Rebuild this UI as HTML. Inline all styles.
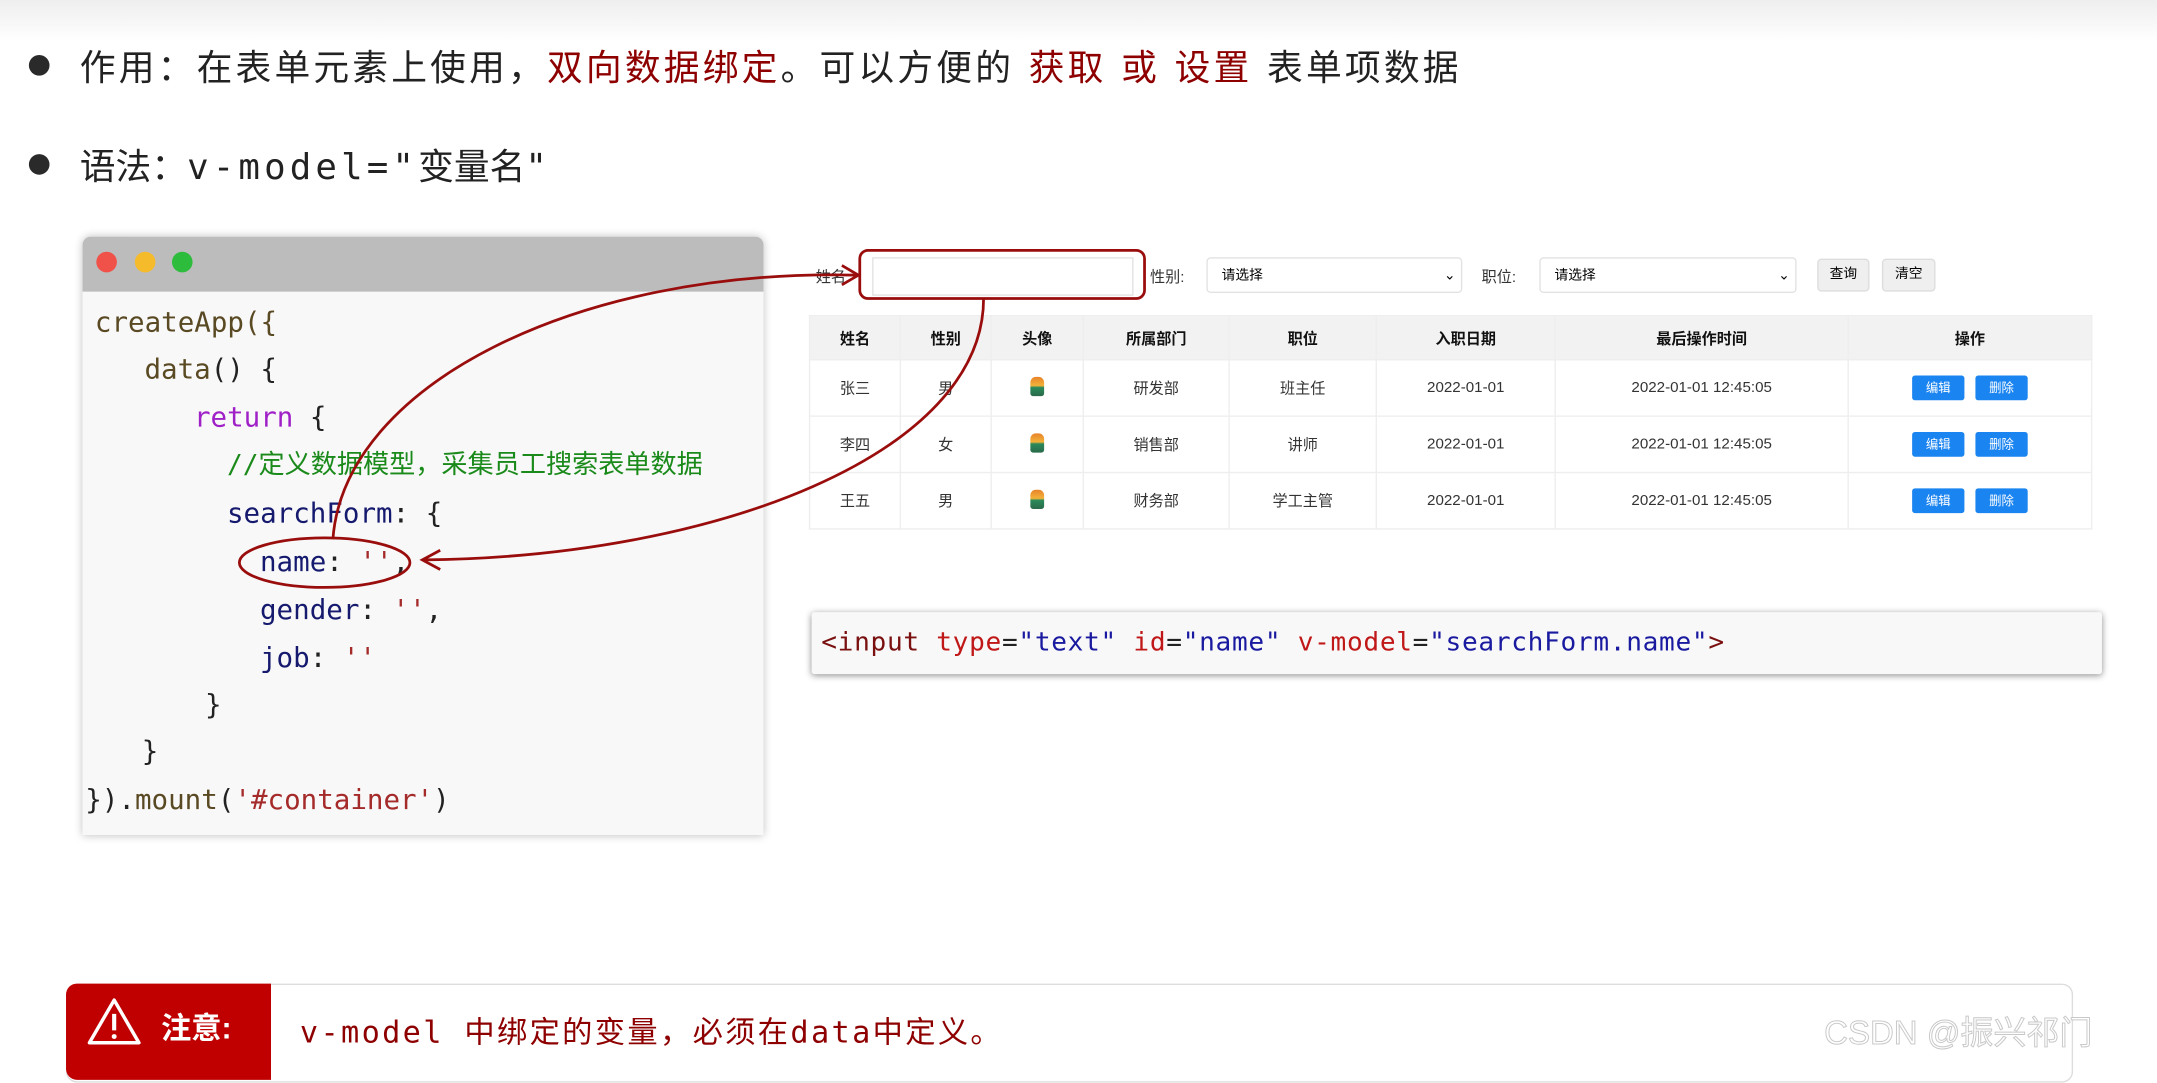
<!DOCTYPE html>
<html><head><meta charset="utf-8"><style>
html,body{margin:0;padding:0;width:2157px;height:1065px;overflow:hidden;background:#fff}
#w{position:absolute;left:0;top:0;width:1568px;height:774px;transform:scale(1.37564);transform-origin:0 0;font-family:"Liberation Sans","Noto Sans CJK SC",sans-serif;background:linear-gradient(#eeeeee 0,#fff 30px,#fff 100%)}
.a{position:absolute;white-space:nowrap}
.dot{position:absolute;width:15px;height:15px;border-radius:50%;background:#2a2a2a}
.big{font-size:26px;color:#222;font-family:"DejaVu Sans","Noto Sans CJK SC",sans-serif}
.r{color:#8e0000}
.win{position:absolute;left:60px;top:172px;width:495px;height:435px;background:#f8f8f8;box-shadow:0 0 6px rgba(0,0,0,.25);border-radius:6px 6px 0 0;overflow:hidden}
.bar{height:40px;background:#bcbcbc}
.cd{position:absolute;font-family:"DejaVu Sans Mono","Noto Sans CJK SC",monospace;font-size:20px;line-height:24px;color:#222}
.fn{color:#5a4a24}.kw{color:#a020c8}.cm{color:#1a8a1a}.pr{color:#161a6e}.st{color:#a52a2a}
.sm{font-size:11px;color:#333;font-family:"Liberation Sans","Noto Sans CJK SC",sans-serif}
.sel{position:absolute;height:26px;border:1px solid #e2e2e2;border-radius:3px;background:#fff;font-size:10px;line-height:26px;padding-left:10px;box-sizing:border-box}
.btn{position:absolute;height:24px;background:#efefef;border:1px solid #ddd;border-radius:3px;font-size:10px;line-height:22px;text-align:center;box-sizing:border-box}
table{position:absolute;left:588px;top:229px;width:933px;border-collapse:collapse;font-size:11px;color:#333;font-family:"Liberation Sans","Noto Sans CJK SC",sans-serif}
td,th{border:1px solid #eee;text-align:center;padding:0}
th{height:31px;background:#f2f2f2;font-weight:bold;color:#111}
td{height:40px}
.b{display:inline-block;width:38px;height:18px;background:#1a84f0;color:#fff;border-radius:2px;font-size:9px;line-height:18px;margin:0 4px}
.av{display:inline-block;width:10px;height:14px;background:linear-gradient(#e8832a 0,#f2b23a 45%,#2a8a5a 55%,#2a6a4a 100%);border-radius:4px 4px 2px 2px}
</style></head><body><div id="w">
<div class="dot" style="left:21px;top:40px"></div>
<div class="a big" style="left:58px;top:29px;letter-spacing:2.3px">作用：在表单元素上使用，<span class="r">双向数据绑定</span>。可以方便的 <span class="r">获取</span> <span class="r">或</span> <span class="r">设置</span> 表单项数据</div>
<div class="dot" style="left:21px;top:112px"></div>
<div class="a big" style="left:58px;top:101px">语法：<span style="font-family:'DejaVu Sans Mono',monospace;letter-spacing:3px">v-model="</span>变量名<span style="font-family:'DejaVu Sans Mono',monospace">"</span></div>

<div class="win"><div class="bar"></div>
<div style="position:absolute;left:10px;top:11px;width:15px;height:15px;border-radius:50%;background:#f0524a"></div>
<div style="position:absolute;left:38px;top:11px;width:15px;height:15px;border-radius:50%;background:#f6bb2a"></div>
<div style="position:absolute;left:65px;top:11px;width:15px;height:15px;border-radius:50%;background:#2ebc3c"></div>
</div>
<div class="cd fn" style="left:69px;top:222px">createApp({</div>
<div class="cd" style="left:105px;top:256px"><span class="fn">data</span>() {</div>
<div class="cd" style="left:141px;top:291px"><span class="kw">return</span> {</div>
<div class="cd cm" style="left:165px;top:326px;font-size:19px">//定义数据模型，采集员工搜索表单数据</div>
<div class="cd" style="left:165px;top:361px"><span class="pr">searchForm</span>: {</div>
<div class="cd" style="left:189px;top:396px"><span class="pr">name</span>: <span class="st">''</span>,</div>
<div class="cd" style="left:189px;top:431px"><span class="pr">gender</span>: <span class="st">''</span>,</div>
<div class="cd" style="left:189px;top:466px"><span class="pr">job</span>: <span class="st">''</span></div>
<div class="cd" style="left:149px;top:500px">}</div>
<div class="cd" style="left:103px;top:534px">}</div>
<div class="cd" style="left:62px;top:569px">}).<span class="fn">mount</span>(<span class="st">'#container'</span>)</div>

<div class="a sm" style="left:593px;top:193px">姓名</div>
<div style="position:absolute;left:634px;top:187px;width:188px;height:26px;border:1px solid #e2e2e2;background:#fff"></div>
<div class="a sm" style="left:836px;top:193px">性别:</div>
<div class="sel" style="left:877px;top:187px;width:186px">请选择<span style="position:absolute;right:4px">⌄</span></div>
<div class="a sm" style="left:1077px;top:193px">职位:</div>
<div class="sel" style="left:1119px;top:187px;width:187px">请选择<span style="position:absolute;right:4px">⌄</span></div>
<div class="btn" style="left:1321px;top:188px;width:38px">查询</div>
<div class="btn" style="left:1368px;top:188px;width:39px">清空</div>

<table>
<tr><th style="width:65px">姓名</th><th style="width:65px">性别</th><th style="width:66px">头像</th><th style="width:105px">所属部门</th><th style="width:106px">职位</th><th style="width:129px">入职日期</th><th style="width:212px">最后操作时间</th><th>操作</th></tr>
<tr><td>张三</td><td>男</td><td><span class="av"></span></td><td>研发部</td><td>班主任</td><td>2022-01-01</td><td>2022-01-01 12:45:05</td><td><span class="b">编辑</span><span class="b">删除</span></td></tr>
<tr><td>李四</td><td>女</td><td><span class="av"></span></td><td>销售部</td><td>讲师</td><td>2022-01-01</td><td>2022-01-01 12:45:05</td><td><span class="b">编辑</span><span class="b">删除</span></td></tr>
<tr><td>王五</td><td>男</td><td><span class="av"></span></td><td>财务部</td><td>学工主管</td><td>2022-01-01</td><td>2022-01-01 12:45:05</td><td><span class="b">编辑</span><span class="b">删除</span></td></tr>
</table>

<div style="position:absolute;left:590px;top:445px;width:938px;height:45px;background:#f8f8f8;box-shadow:0 1px 5px rgba(0,0,0,.45);border-radius:2px"></div>
<div class="cd" style="left:597px;top:455px;font-size:19px;letter-spacing:0.5px"><span style="color:#7a1010">&lt;input</span> <span style="color:#c01818">type</span>=<span style="color:#1a1aa0">"text"</span> <span style="color:#c01818">id</span>=<span style="color:#1a1aa0">"name"</span> <span style="color:#c01818">v-model</span>=<span style="color:#1a1aa0">"searchForm.name"</span><span style="color:#7a1010">&gt;</span></div>

<svg style="position:absolute;left:0;top:0" width="1568" height="774">
<g fill="none" stroke="#9a0d0d" stroke-width="2">
<rect x="625" y="182" width="207" height="35" rx="6"/>
<ellipse cx="236" cy="409" rx="62" ry="18"/>
<path d="M242 392 C 250 280, 420 195, 622 200"/>
<path d="M612 193 L624 200 L612 207"/>
<path d="M715 217 C 715 330, 520 405, 308 407"/>
<path d="M320 400 L307 407 L320 414"/>
</g></svg>

<div style="position:absolute;left:48px;top:715px;width:1457px;height:70px;border:1px solid #ddd;border-radius:8px;background:#fff"></div>
<div style="position:absolute;left:48px;top:715px;width:149px;height:70px;background:#c00000;border-radius:8px 0 0 8px"></div>
<svg style="position:absolute;left:62px;top:724px" width="42" height="38"><path d="M21 3 L39 34 L3 34 Z" fill="none" stroke="#fff" stroke-width="2.5" stroke-linejoin="round"/><path d="M21 13 L21 25" stroke="#fff" stroke-width="3"/><circle cx="21" cy="29.5" r="1.8" fill="#fff"/></svg>
<div class="a" style="left:117px;top:730px;color:#fff;font-size:22px;font-weight:bold">注意:</div>
<div class="a" style="left:218px;top:733px;color:#8e0000;font-size:22px;letter-spacing:1.7px;font-family:'DejaVu Sans Mono','Noto Sans CJK SC',monospace">v-model 中绑定的变量，必须在data中定义。</div>
<div class="a" style="left:1326px;top:731px;color:#fff;font-size:24px;-webkit-text-stroke:0.7px #c8c8c8">CSDN @振兴祁门</div>
</div></body></html>
